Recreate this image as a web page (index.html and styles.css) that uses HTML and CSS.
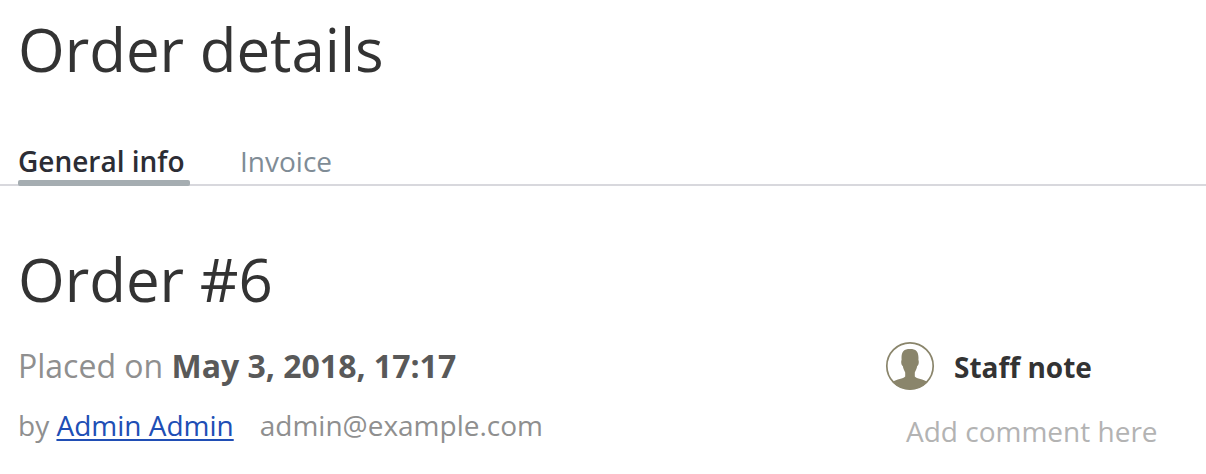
FILE: index.html
```html
<!DOCTYPE html>
<html lang="en">
<head>
<meta charset="utf-8">
<title>Order details</title>
<link rel="stylesheet" href="styles.css">
</head>
<body>
<h1 class="title">Order details</h1>
<nav class="tabs">
  <a class="tab active">General info</a>
  <a class="tab">Invoice</a>
</nav>
<main class="order">
  <section class="summary">
    <h2 class="title">Order #6</h2>
    <p class="placed">Placed on <strong>May 3, 2018, 17:17</strong></p>
    <p class="by"><span>by <a class="user" href="#">Admin Admin</a></span><span>admin@example.com</span></p>
  </section>
  <aside class="note">
    <div class="note-head">
      <svg class="avatar" viewBox="0 0 50 50">
        <circle cx="25" cy="25" r="23.2" fill="#fff" stroke="#8a856b" stroke-width="1.700"/>
        <path fill="#8a856b" d="M25 8C18.500 8 16 11 16.600 19C15.800 20 16.200 24.500 17.800 25C18.200 28 19.600 30 20.200 31.500V35.500C18.500 38 11.500 38 7.500 41A24 24 0 0 0 42.500 41C38.500 38 31.500 38 29.800 35.500V31.500C30.400 30 31.800 28 32.200 25C33.800 24.500 34.200 20 33.400 19C34 11 31.500 8 25 8Z"/>
      </svg>
      <strong class="note-title">Staff note</strong>
    </div>
    <p class="comment">Add comment here</p>
  </aside>
</main>
</body>
</html>
```
FILE: styles.css
```css
* { box-sizing: border-box; }
body { margin: 0; background: #fff; color: #333; font-family: "Open Sans", "Noto Sans", sans-serif; }
h1, h2, p { margin: 0; }
.title { font-size: 60px; font-weight: 400; line-height: 82px; white-space: nowrap; }
h1.title { padding: 8px 18px 0; height: 142px; }
.tabs { display: flex; gap: 50px; height: 44px; padding-left: 18px; border-bottom: 2px solid #d8d8dd; }
.tab { height: 44px; font-size: 28px; line-height: 39px; color: #7f8c96; white-space: nowrap; }
.active { position: relative; width: 172px; color: #2c2d35; font-weight: 600; }
.active::after { content: ""; position: absolute; left: 0; right: 0; bottom: 0; height: 6px; background: #a5adb1; border-radius: 2px; }
.order { display: flex; justify-content: space-between; padding: 52px 0 0 18px; }
.placed { margin-top: 24px; font-size: 32px; line-height: 44px; color: #8f8f8f; white-space: nowrap; }
.placed strong { color: #595959; font-weight: 700; }
.by { display: flex; gap: 26px; margin-top: 18px; font-size: 28px; line-height: 38px; color: #8f8f8f; white-space: nowrap; }
.user { color: #204eb5; text-decoration-thickness: 2px; text-underline-offset: 3px; }
.note { width: 321px; padding-top: 103px; }
.note-head { display: flex; align-items: center; gap: 19px; height: 50px; }
.avatar { width: 50px; height: 50px; }
.note-title { padding-top: 2px; font-size: 28px; color: #333; }
.comment { margin: 21px 0 0 21px; font-size: 28px; line-height: 38px; color: #b3b3b3; white-space: nowrap; }
```
